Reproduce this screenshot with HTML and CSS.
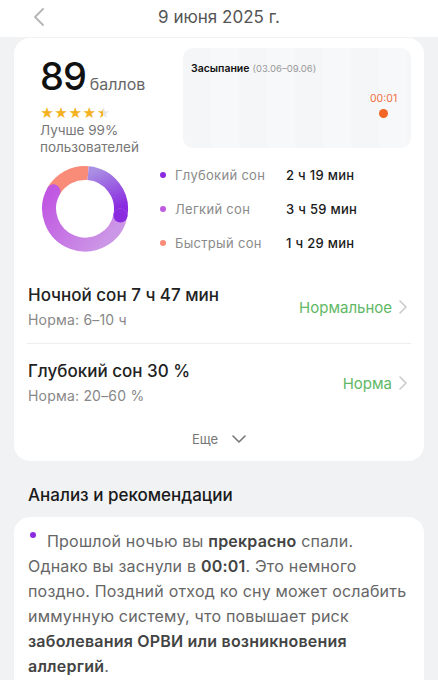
FILE: index.html
```html
<!DOCTYPE html>
<html lang="ru">
<head>
  <meta charset="UTF-8">
  <title>Сон</title>
  <link rel="stylesheet" href="styles.css">
</head>
<body>
  <header class="topbar">
    <svg class="back" width="12" height="20" viewBox="0 0 12 20">
      <path d="M10 2 L2 10 L10 18" fill="none" stroke="#b5b5b5" stroke-width="1.8" stroke-linecap="round" stroke-linejoin="round"/>
    </svg>
    <h1>9 июня 2025 г.</h1>
  </header>

  <div class="card summary">
    <div class="top">
      <div class="score">
        <div class="points"><span class="num">89</span> <span class="unit">баллов</span></div>
        <div class="stars">★★★★<span class="half">★</span></div>
        <div class="better">Лучше 99%<br>пользователей</div>
      </div>
      <div class="chart">
        <div class="chart-title"><b>Засыпание</b> <span>(03.06–09.06)</span></div>
        <div class="point">
          <span>00:01</span>
          <i></i>
        </div>
      </div>
    </div>

    <div class="phases">
      <svg class="donut" width="90" height="90" viewBox="0 0 90 90">
        <defs>
          <linearGradient id="deep" x1="0" y1="0" x2="0.3" y2="1">
            <stop offset="0" stop-color="#a98fe3"/>
            <stop offset="1" stop-color="#8a2be0"/>
          </linearGradient>
          <linearGradient id="light" x1="0" y1="0" x2="1" y2="0.6">
            <stop offset="0" stop-color="#c056e2"/>
            <stop offset="1" stop-color="#cc96e6"/>
          </linearGradient>
        </defs>
        <!-- r = 36, центр 45,45 -->
        <path d="M 13.5 27.3 A 36 36 0 0 1 48.1 9.1" fill="none" stroke="#f98b79" stroke-width="14"/>
        <path d="M 48.1 9.1 A 36 36 0 0 1 80.4 51.6" fill="none" stroke="url(#deep)" stroke-width="14"/>
        <path d="M 80.4 51.6 A 36 36 0 1 1 13.5 27.3" fill="none" stroke="url(#light)" stroke-width="14" stroke-linecap="round"/>
        <circle cx="80.4" cy="51.6" r="7" fill="#8a2be0"/>
      </svg>
      <ul class="legend">
        <li><i class="dot deep"></i><span class="label">Глубокий сон</span><span class="val">2 ч 19 мин</span></li>
        <li><i class="dot light"></i><span class="label">Легкий сон</span><span class="val">3 ч 59 мин</span></li>
        <li><i class="dot rem"></i><span class="label">Быстрый сон</span><span class="val">1 ч 29 мин</span></li>
      </ul>
    </div>

    <div class="row">
      <div>
        <div class="row-title">Ночной сон 7 ч 47 мин</div>
        <div class="row-sub">Норма: 6–10 ч</div>
      </div>
      <div class="status">Нормальное <svg width="8" height="14" viewBox="0 0 8 14"><path d="M1 1 L7 7 L1 13" fill="none" stroke="#c8c8c8" stroke-width="1.5" stroke-linecap="round" stroke-linejoin="round"/></svg></div>
    </div>
    <div class="row">
      <div>
        <div class="row-title">Глубокий сон 30 %</div>
        <div class="row-sub">Норма: 20–60 %</div>
      </div>
      <div class="status">Норма <svg width="8" height="14" viewBox="0 0 8 14"><path d="M1 1 L7 7 L1 13" fill="none" stroke="#c8c8c8" stroke-width="1.5" stroke-linecap="round" stroke-linejoin="round"/></svg></div>
    </div>

    <div class="more">Еще <svg width="14" height="8" viewBox="0 0 14 8"><path d="M1 1 L7 7 L13 1" fill="none" stroke="#777" stroke-width="1.6" stroke-linecap="round" stroke-linejoin="round"/></svg></div>
  </div>

  <h2 class="section">Анализ и рекомендации</h2>

  <div class="card advice">
    <p><i class="bullet"></i>Прошлой ночью вы <b>прекрасно</b> спали. Однако вы заснули в <b>00:01</b>. Это немного поздно. Поздний отход ко сну может ослабить иммунную систему, что повышает риск <b>заболевания ОРВИ или возникновения аллергий</b>.</p>
  </div>
</body>
</html>
```

FILE: styles.css
```css
body {
  margin: 0;
  background-color: #f1f2f4;
  font-family: 'Inter', 'Noto Sans', sans-serif;
  color: #222;
  overflow: hidden;
}

.topbar {
  height: 37px;
  background-color: #fff;
  display: flex;
  align-items: center;
  justify-content: center;
  position: relative;
}

.topbar .back {
  position: absolute;
  left: 33px;
  top: 7px;
}

.topbar h1 {
  margin: 0;
  font-size: 17px;
  font-weight: 400;
  color: #555;
  padding-bottom: 3px;
}

.card {
  background-color: #fff;
  margin: 0 14px;
  border-radius: 16px;
}

.summary {
  margin-top: 1px;
  padding: 10px 13px 10px 13px;
}

.top {
  display: flex;
  justify-content: space-between;
}

.score {
  padding-left: 13px;
  padding-top: 11px;
}

.points {
  display: flex;
  align-items: baseline;
  gap: 4px;
  line-height: 34px;
}

.points .num {
  font-size: 38px;
  font-weight: 500;
  color: #111;
  letter-spacing: -1px;
}

.points .unit {
  font-size: 16px;
  color: #666;
}

.stars {
  margin-top: 5px;
  font-size: 13.5px;
  color: #f4b223;
  line-height: 14px;
}

.stars .half {
  background: linear-gradient(to right, #f4b223 50%, #e6e6e6 50%);
  -webkit-background-clip: text;
  color: transparent;
}

.better {
  margin-top: 2px;
  font-size: 13.5px;
  line-height: 17px;
  color: #777;
}

.chart {
  width: 228px;
  height: 100px;
  background: repeating-linear-gradient(to right, #f5f6f8 0, #f5f6f8 28px, #f7f8fa 28px, #f7f8fa 56px);
  border-radius: 10px;
  position: relative;
}

.chart-title {
  padding: 14px 0 0 8px;
  font-size: 10.5px;
}

.chart-title b {
  font-weight: 600;
  color: #111;
}

.chart-title span {
  color: #999;
  font-size: 9.5px;
}

.point {
  position: absolute;
  left: 187px;
  top: 44px;
  display: flex;
  flex-direction: column;
  align-items: center;
  gap: 4px;
  font-size: 10.5px;
  color: #f0703e;
}

.point i {
  width: 9px;
  height: 9px;
  border-radius: 50%;
  background-color: #f26524;
}

.phases {
  display: flex;
  align-items: center;
  margin-top: 2px;
  padding-left: 13px;
}

.legend {
  list-style: none;
  margin: 0 0 0 30px;
  padding: 0;
}

.legend li {
  display: flex;
  align-items: center;
  height: 34px;
  font-size: 13px;
}

.dot {
  width: 6px;
  height: 6px;
  border-radius: 50%;
  margin-right: 9px;
}

.dot.deep { background-color: #8a2be0; }
.dot.light { background-color: #c05ae0; }
.dot.rem { background-color: #f98b79; }

.legend .label {
  width: 111px;
  color: #8a8a8a;
  letter-spacing: 0.3px;
}

.legend .val {
  color: #1a1a1a;
  font-weight: 500;
  letter-spacing: 0.3px;
}

.row {
  display: flex;
  justify-content: space-between;
  align-items: center;
  margin: 0;
  padding: 13px 0 11px 1px;
}

.row + .row {
  border-top: 1px solid #eeeeee;
  padding-top: 14px;
}

.phases + .row {
  margin-top: 9px;
}

.row-title {
  font-size: 17px;
  font-weight: 500;
  color: #222;
  line-height: 26px;
}

.row-sub {
  font-size: 14px;
  color: #888;
  line-height: 24px;
  letter-spacing: 0.2px;
}

.status {
  display: flex;
  align-items: center;
  gap: 7px;
  font-size: 15px;
  color: #5fb864;
  padding-right: 4px;
}

.more {
  display: flex;
  justify-content: center;
  align-items: center;
  gap: 14px;
  font-size: 13px;
  color: #777;
  padding: 12px 0 4px;
}

.section {
  margin: 23px 0 0 28px;
  font-size: 17px;
  font-weight: 500;
  color: #1a1a1a;
  line-height: 22px;
}

.advice {
  margin-top: 11px;
  padding: 12px 12px 20px 14px;
}

.advice p {
  margin: 0;
  font-size: 16px;
  line-height: 25px;
  color: #666;
  letter-spacing: 0.2px;
}

.advice b {
  font-weight: 600;
  color: #444;
}

.bullet {
  display: inline-block;
  width: 6px;
  height: 6px;
  border-radius: 50%;
  background-color: #8a2be0;
  vertical-align: 9px;
  margin: 0 11px 0 2px;
}
```
